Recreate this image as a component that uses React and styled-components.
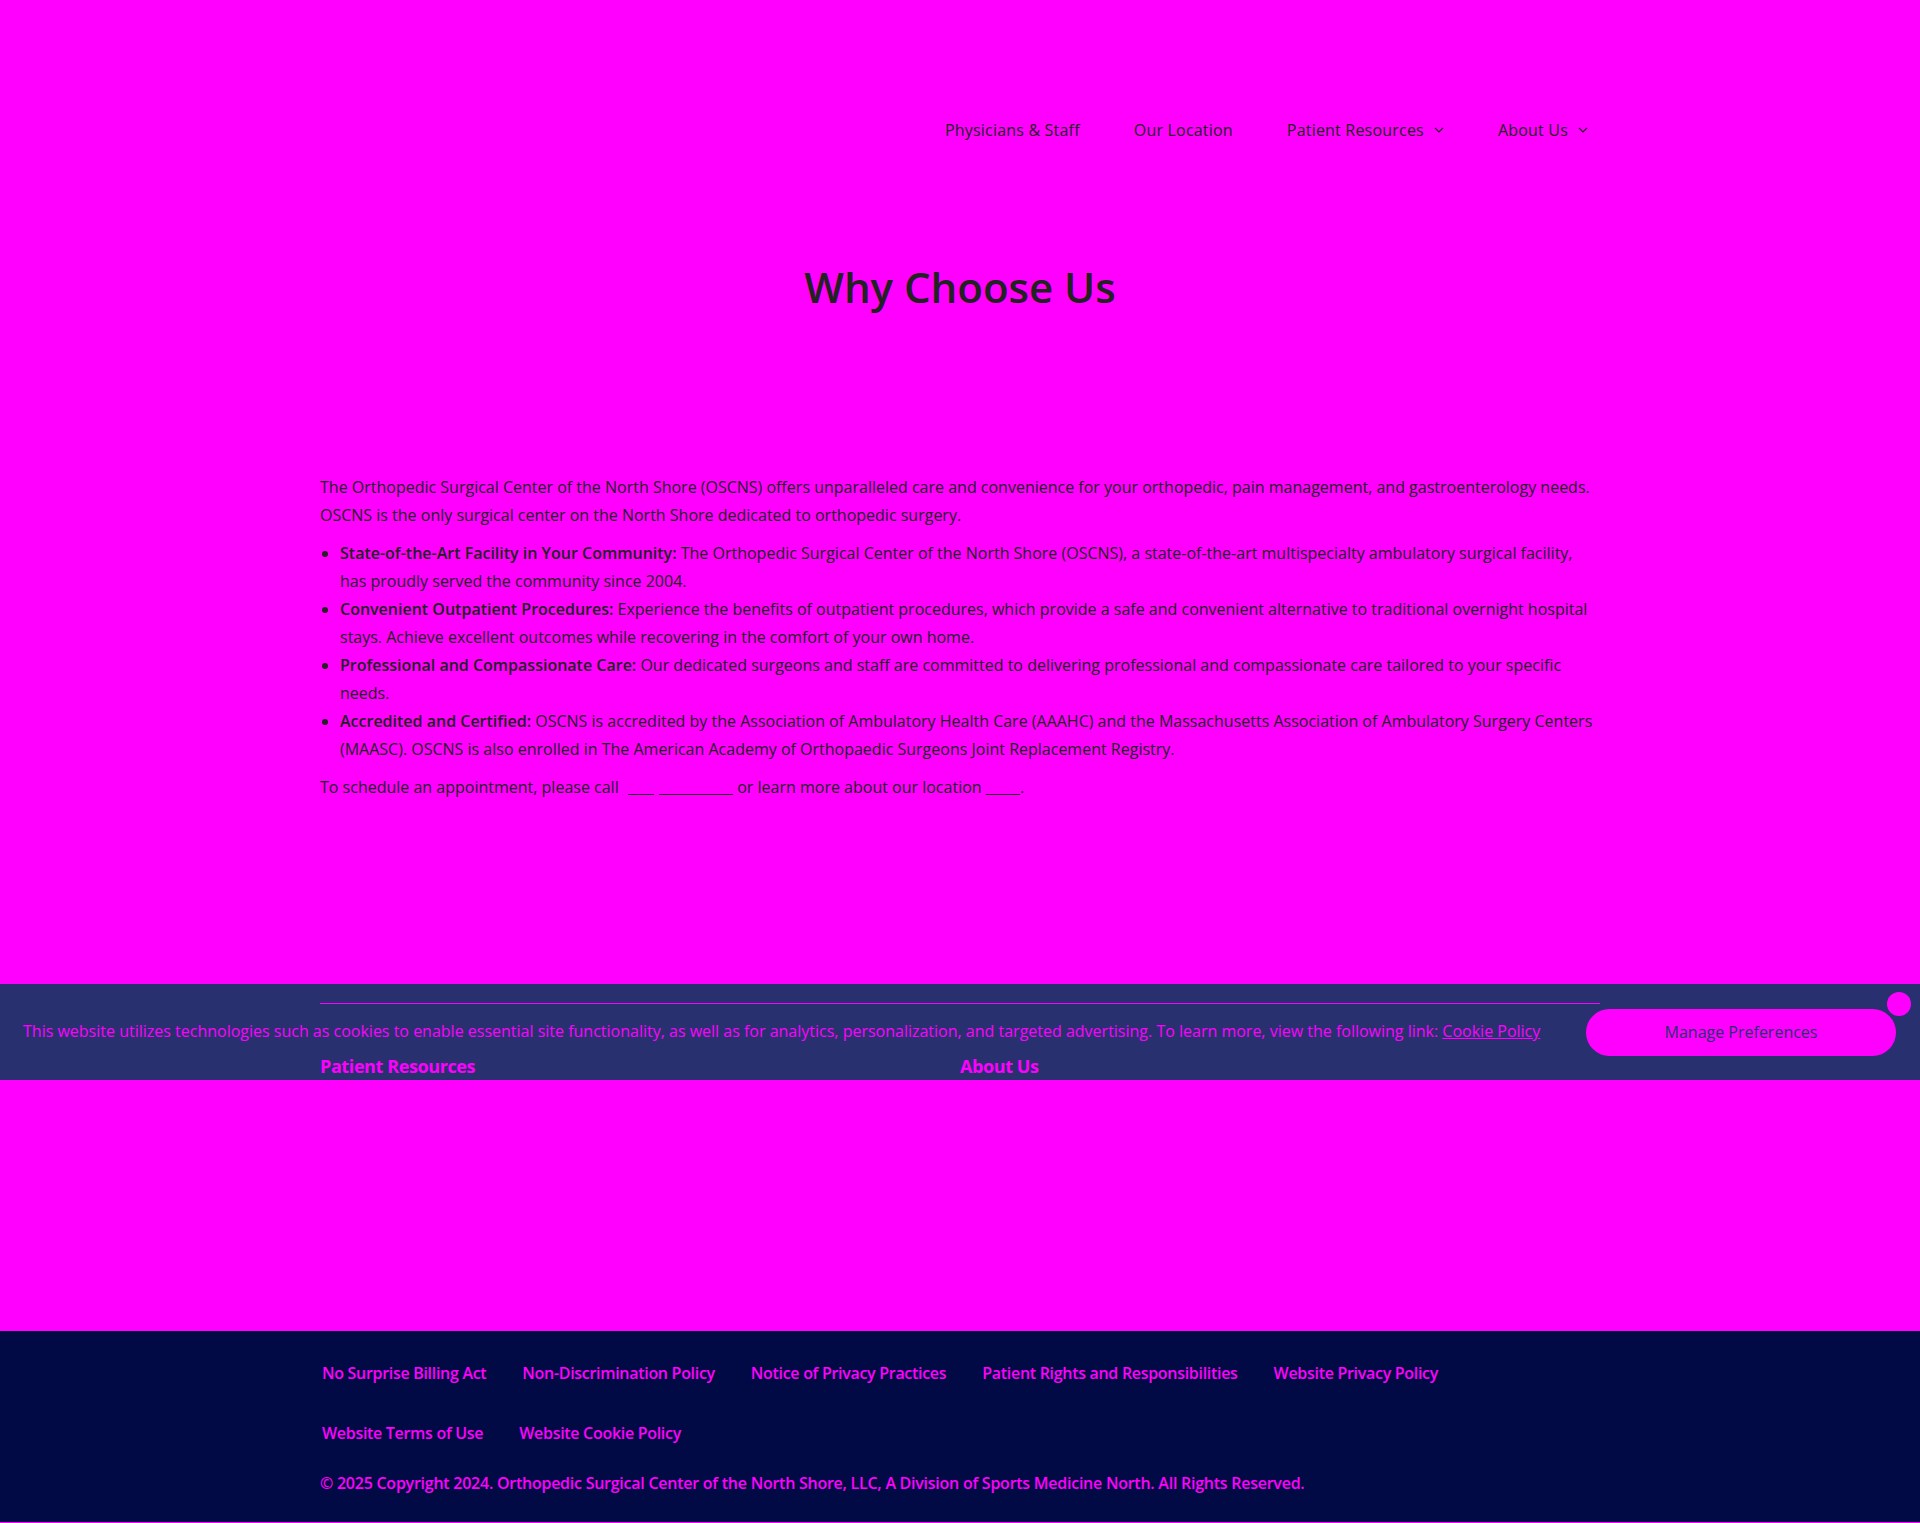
import React from "react";
import styled, { createGlobalStyle } from "styled-components";

const GlobalStyle = createGlobalStyle`
  html, body {
    margin: 0;
    padding: 0;
  }
  body {
    background: #ff00ff;
    color: #222;
    font-family: "Open Sans", "Noto Sans", Arial, sans-serif;
  }
  * {
    box-sizing: border-box;
  }
`;

const Page = styled.div`
  position: relative;
  min-height: 1523px;
`;

const Header = styled.header`
  width: 1280px;
  height: 260px;
  margin: 0 auto;
  display: flex;
  align-items: center;
  justify-content: space-between;
`;

const Brand = styled.a`
  display: block;
  width: 260px;
  height: 80px;
`;

const Nav = styled.nav`
  display: flex;
  align-items: center;
  gap: 54px;
  padding-right: 12px;
`;

const NavItem = styled.a`
  display: flex;
  align-items: center;
  gap: 10px;
  font-size: 16px;
  line-height: 24px;
  letter-spacing: 0.2px;
  color: #222;
  text-decoration: none;
`;

const Chevron = () => (
  <svg width="10" height="6" viewBox="0 0 10 6" fill="none">
    <polyline points="1,1 5,5 9,1" stroke="#222" strokeWidth="1.2" />
  </svg>
);

const Title = styled.h1`
  margin: 2px 0 0;
  text-align: center;
  font-size: 42px;
  line-height: 50px;
  font-weight: 600;
  color: #222;
`;

const Content = styled.main`
  width: 1280px;
  margin: 161px auto 0;
  font-size: 16px;
  line-height: 28px;
  color: #222;

  p {
    margin: 0 0 10px;
  }
`;

const List = styled.ul`
  margin: 0 0 10px;
  padding-left: 20px;
`;

const Label = styled.strong`
  font-weight: 600;
`;

const InlineLink = styled.a`
  color: #ff00ff;
  text-decoration: underline;
  text-decoration-color: #222;
`;

const FooterWidgets = styled.section`
  position: relative;
  z-index: 2;
  width: 1280px;
  margin: 202px auto 0;
  border-top: 1px solid #ff00ff;
  padding: 50px 0 253px;
  display: grid;
  grid-template-columns: repeat(2, 1fr);
`;

const WidgetTitle = styled.h3`
  margin: 0;
  font-size: 18px;
  line-height: 24px;
  font-weight: 700;
  letter-spacing: -0.4px;
  color: #ff00ff;
`;

const BottomBar = styled.footer`
  background: #020a45;
  padding: 30px 0 27px;
`;

const BottomInner = styled.div`
  width: 1280px;
  margin: 0 auto;
`;

const PolicyLinks = styled.div`
  display: flex;
  flex-wrap: wrap;
  column-gap: 36px;
  row-gap: 36px;
  padding-left: 2px;
`;

const PolicyLink = styled.a`
  font-size: 16px;
  line-height: 24px;
  font-weight: 600;
  letter-spacing: -0.3px;
  color: #ff00ff;
  text-decoration: none;
`;

const Copyright = styled.p`
  margin: 26px 0 0;
  font-size: 16px;
  line-height: 24px;
  font-weight: 600;
  letter-spacing: -0.25px;
  color: #ff00ff;
`;

const CookieBanner = styled.div`
  position: absolute;
  top: 984px;
  left: 0;
  right: 0;
  height: 96px;
  z-index: 1;
  background: #283070;
  display: flex;
  align-items: center;
  justify-content: space-between;
  gap: 40px;
  padding: 0 24px 2px 23px;
`;

const CookieText = styled.p`
  margin: 0;
  font-size: 16px;
  line-height: 22px;
  color: #ff00ff;

  a {
    color: #ff00ff;
    text-decoration: underline;
  }
`;

const PrefButton = styled.button`
  flex: 0 0 310px;
  height: 47px;
  margin-top: 2px;
  border: none;
  border-radius: 24px;
  background: #ff00ff;
  color: #283070;
  font-family: inherit;
  font-size: 16px;
`;

const CloseButton = styled.button`
  position: absolute;
  top: 8px;
  right: 9px;
  width: 24px;
  height: 24px;
  border: none;
  padding: 0;
  border-radius: 50%;
  background: #ff00ff;
`;

const navItems = [
  { label: "Physicians & Staff" },
  { label: "Our Location" },
  { label: "Patient Resources", menu: true },
  { label: "About Us", menu: true },
];

const policies = [
  "No Surprise Billing Act",
  "Non-Discrimination Policy",
  "Notice of Privacy Practices",
  "Patient Rights and Responsibilities",
  "Website Privacy Policy",
  "Website Terms of Use",
  "Website Cookie Policy",
];

const App = () => {
  return (
    <>
      <GlobalStyle />
      <Page>
        <Header>
          <Brand href="#" aria-label="Orthopedic Surgical Center of the North Shore" />
          <Nav>
            {navItems.map((item) => (
              <NavItem href="#" key={item.label}>
                {item.label}
                {item.menu && <Chevron />}
              </NavItem>
            ))}
          </Nav>
        </Header>

        <Title>Why Choose Us</Title>

        <Content>
          <p>
            The Orthopedic Surgical Center of the North Shore (OSCNS) offers
            unparalleled care and convenience for your orthopedic, pain
            management, and gastroenterology needs. OSCNS is the only surgical
            center on the North Shore dedicated to orthopedic surgery.
          </p>
          <List>
            <li>
              <Label>State-of-the-Art Facility in Your Community:</Label> The
              Orthopedic Surgical Center of the North Shore (OSCNS), a
              state-of-the-art multispecialty ambulatory surgical facility, has
              proudly served the community since 2004.
            </li>
            <li>
              <Label>Convenient Outpatient Procedures:</Label> Experience the
              benefits of outpatient procedures, which provide a safe and
              convenient alternative to traditional overnight hospital stays.
              Achieve excellent outcomes while recovering in the comfort of your
              own home.
            </li>
            <li>
              <Label>Professional and Compassionate Care:</Label> Our dedicated
              surgeons and staff are committed to delivering professional and
              compassionate care tailored to your specific needs.
            </li>
            <li>
              <Label>Accredited and Certified:</Label> OSCNS is accredited by
              the Association of Ambulatory Health Care (AAAHC) and the
              Massachusetts Association of Ambulatory Surgery Centers (MAASC).
              OSCNS is also enrolled in The American Academy of Orthopaedic
              Surgeons Joint Replacement Registry.
            </li>
          </List>
          <p>
            To schedule an appointment, please call{" "}
            <InlineLink href="#">(978) 777-0500</InlineLink> or learn more about
            our location <InlineLink href="#">here</InlineLink>.
          </p>
        </Content>

        <FooterWidgets>
          <WidgetTitle>Patient Resources</WidgetTitle>
          <WidgetTitle>About Us</WidgetTitle>
        </FooterWidgets>

        <BottomBar>
          <BottomInner>
            <PolicyLinks>
              {policies.map((p) => (
                <PolicyLink href="#" key={p}>
                  {p}
                </PolicyLink>
              ))}
            </PolicyLinks>
            <Copyright>
              © 2025 Copyright 2024. Orthopedic Surgical Center of the North
              Shore, LLC, A Division of Sports Medicine North. All Rights
              Reserved.
            </Copyright>
          </BottomInner>
        </BottomBar>

        <CookieBanner>
          <CookieText>
            This website utilizes technologies such as cookies to enable
            essential site functionality, as well as for analytics,
            personalization, and targeted advertising. To learn more, view the
            following link: <a href="#">Cookie Policy</a>
          </CookieText>
          <PrefButton>Manage Preferences</PrefButton>
          <CloseButton aria-label="Close" />
        </CookieBanner>
      </Page>
    </>
  );
};

export default App;
